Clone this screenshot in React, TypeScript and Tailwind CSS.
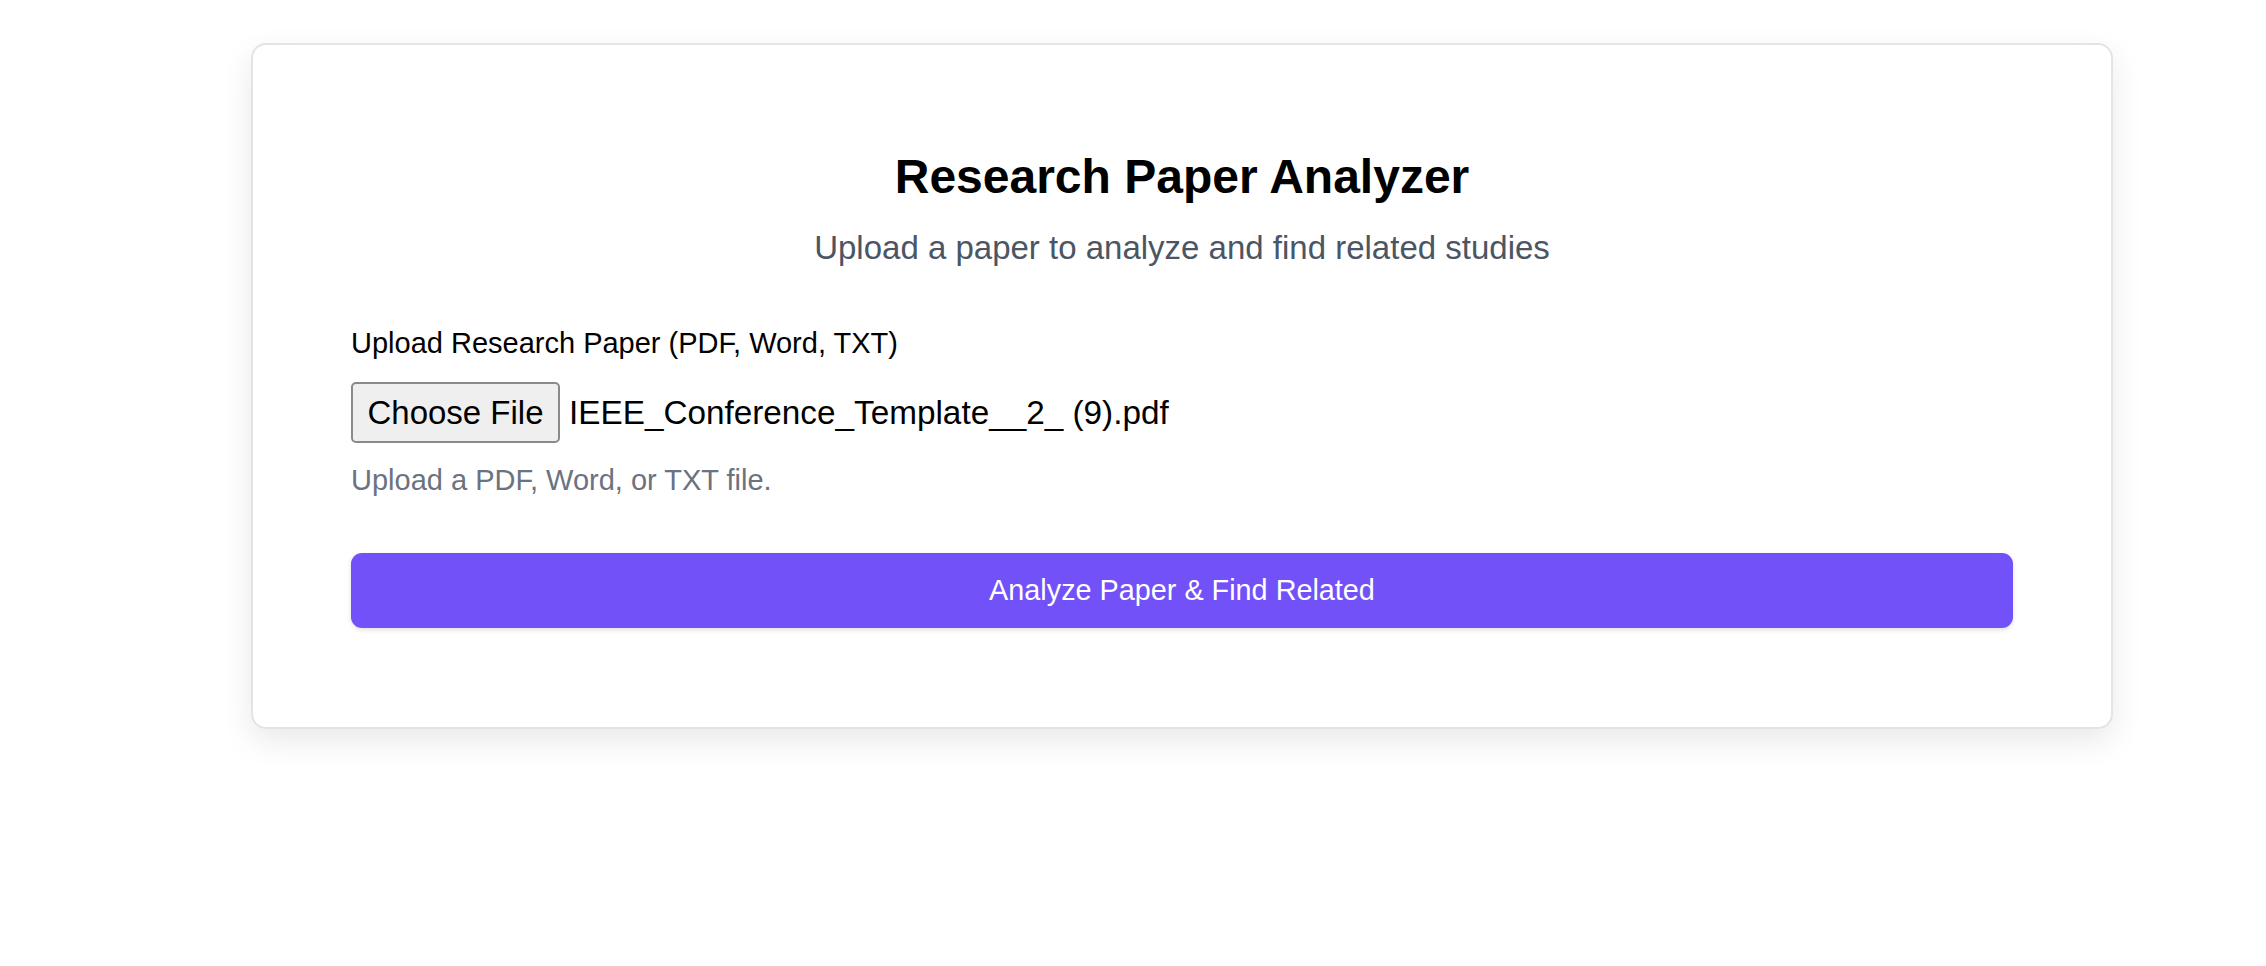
import React from 'react';

export default function App() {
  return (
    <div className="min-h-screen bg-white pt-[43px] pl-[251px] font-['Liberation_Sans',Arial,sans-serif]">
      <div className="w-[1862px] rounded-[15px] border-2 border-[#e4e4e4] bg-white px-[98px] pt-[104px] pb-[99px] shadow-[0_12px_32px_rgba(0,0,0,0.09)]">
        {/* Heading */}
        <div className="text-center">
          <h1 className="text-[48px] leading-[56px] font-bold text-black">Research Paper Analyzer</h1>
          <p className="mt-[24px] text-[33px] leading-[38px] text-[#4b5563]">
            Upload a paper to analyze and find related studies
          </p>
        </div>

        {/* Upload field */}
        <div className="mt-[60px]">
          <label className="block text-[29px] leading-[33px] text-black">
            Upload Research Paper (PDF, Word, TXT)
          </label>
          <div className="mt-[22px] flex items-center">
            <button
              type="button"
              className="flex h-[61px] w-[209px] items-center justify-center rounded-[5px] border-2 border-[#8a8a8a] bg-[#efefef] text-[33px] leading-[38px] text-black"
            >
              Choose File
            </button>
            <span className="ml-[9px] text-[33.3px] leading-[38px] text-black">
              IEEE_Conference_Template__2_ (9).pdf
            </span>
          </div>
          <p className="mt-[21px] text-[29px] leading-[33px] text-[#6b7280]">Upload a PDF, Word, or TXT file.</p>
        </div>

        {/* Submit */}
        <button
          type="button"
          className="mt-[56px] flex h-[75px] w-full items-center justify-center rounded-[11px] bg-[#7251f8] text-[28.8px] text-white shadow-[0_2px_5px_rgba(0,0,0,0.12)]"
        >
          Analyze Paper &amp; Find Related
        </button>
      </div>
    </div>
  );
}
